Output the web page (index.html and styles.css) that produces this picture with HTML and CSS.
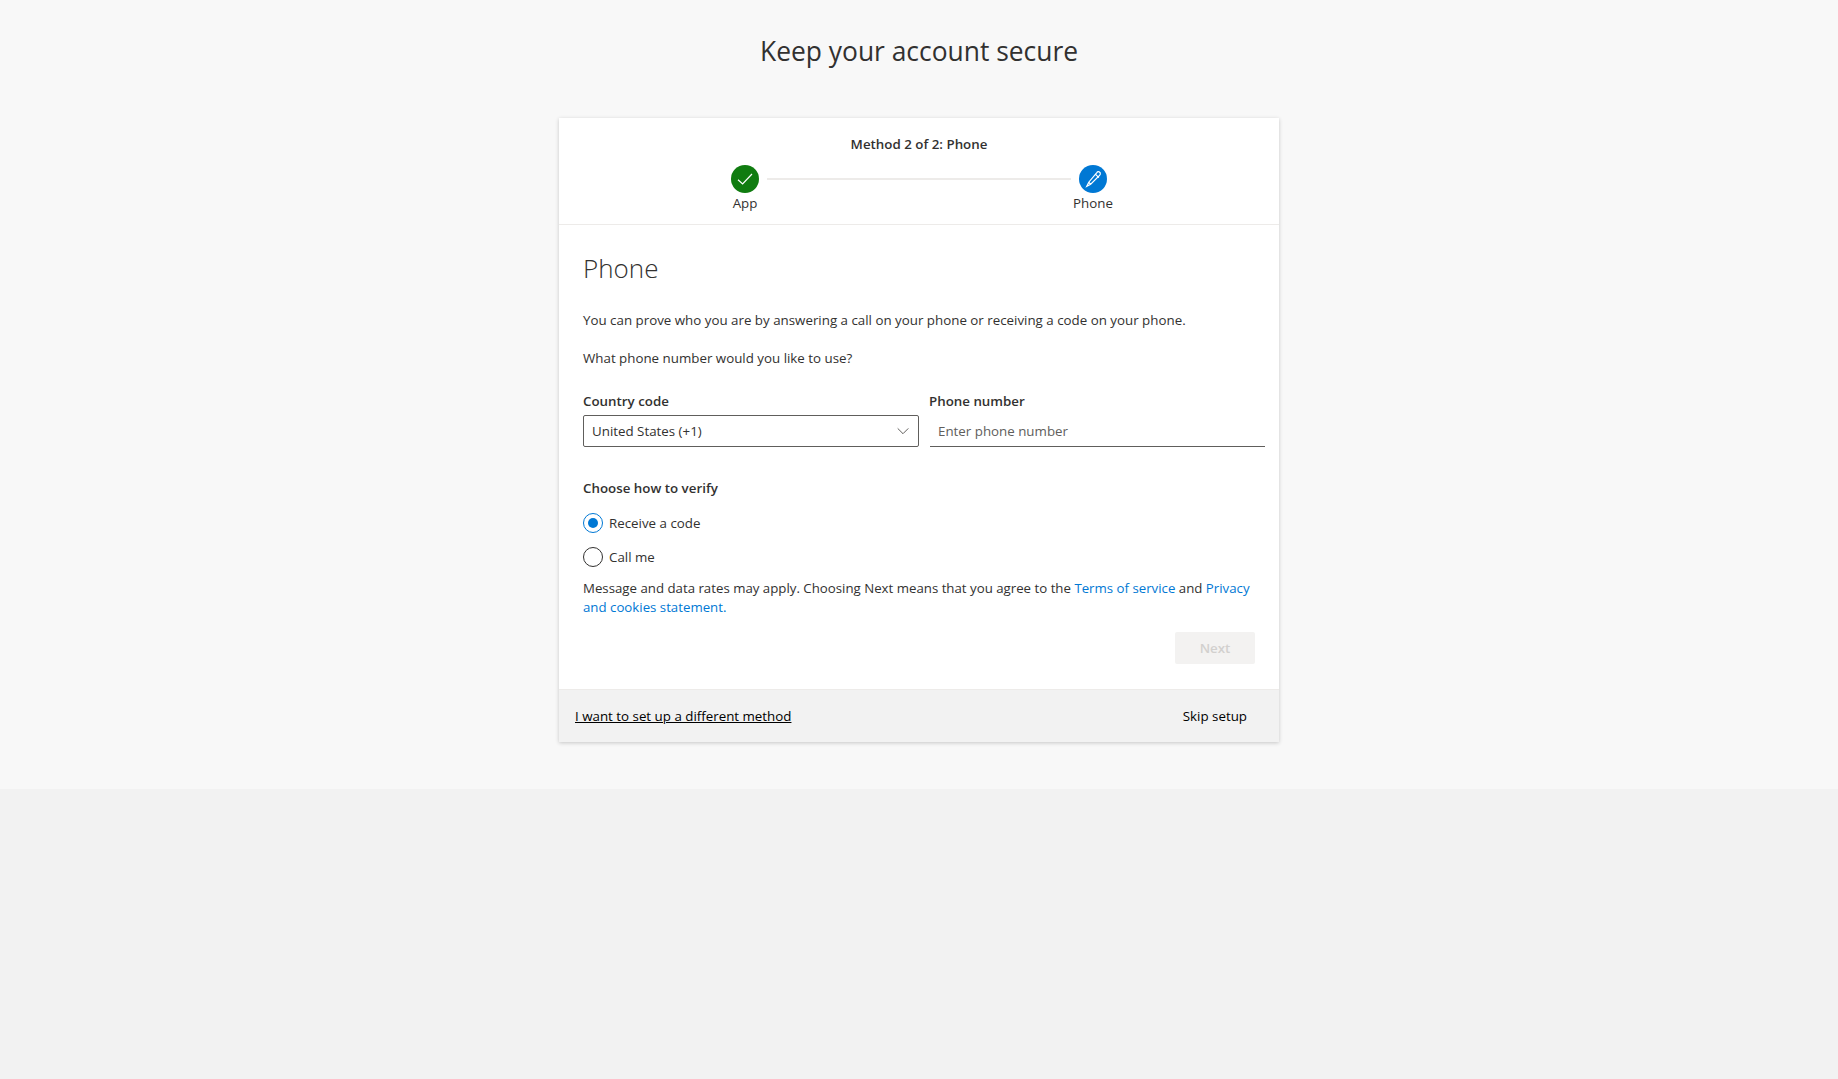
FILE: index.html
```html
<!DOCTYPE html>
<html lang="en">
<head>
    <meta charset="UTF-8">
    <title>Keep your account secure</title>
    <link rel="stylesheet" href="styles.css">
</head>
<body>
    <main class="page">
        <h1 class="page-title">Keep your account secure</h1>
        <section class="card">
            <header class="card-head">
                <div class="method-title">Method 2 of 2: Phone</div>
                <div class="steps">
                    <div class="step">
                        <span class="step-icon done">
                            <svg width="16" height="16" viewBox="0 0 16 16"><path d="M1 8.7L5.6 13 15 3" fill="none" stroke="#fff" stroke-width="1.2"/></svg>
                        </span>
                        <span class="step-label">App</span>
                    </div>
                    <div class="step-line"></div>
                    <div class="step">
                        <span class="step-icon current">
                            <svg width="19" height="19" viewBox="0 0 16 16"><path d="M10.8 2.2a1.6 1.6 0 0 1 2.9 1.3c-.1.4-.3.7-.6 1L5.6 12 2.3 13.7 4 10.3zM9.6 3.5l2.9 2.9M4 10.3l1.6 1.7" fill="none" stroke="#fff" stroke-width="1"/></svg>
                        </span>
                        <span class="step-label">Phone</span>
                    </div>
                </div>
            </header>
            <div class="card-body">
                <h2 class="section-title">Phone</h2>
                <p class="intro">You can prove who you are by answering a call on your phone or receiving a code on your phone.</p>
                <p class="question">What phone number would you like to use?</p>
                <div class="phone-row">
                    <div class="field country">
                        <label class="field-label">Country code</label>
                        <div class="select-box">
                            <span>United States (+1)</span>
                            <svg width="12" height="12" viewBox="0 0 12 12"><path d="M.7 3.4L6 8.7l5.3-5.3" fill="none" stroke="#605e5c" stroke-width="1"/></svg>
                        </div>
                    </div>
                    <div class="field number">
                        <label class="field-label" for="phone">Phone number</label>
                        <input class="phone-input" id="phone" type="text" placeholder="Enter phone number">
                    </div>
                </div>
                <div class="verify-label">Choose how to verify</div>
                <div class="radio-row first">
                    <span class="radio checked"></span>
                    <span>Receive a code</span>
                </div>
                <div class="radio-row">
                    <span class="radio"></span>
                    <span>Call me</span>
                </div>
                <p class="terms">Message and data rates may apply. Choosing Next means that you agree to the <a href="#">Terms of service</a> and <a href="#">Privacy</a> <a href="#">and cookies statement.</a></p>
                <div class="actions">
                    <button class="next-btn" type="button" disabled>Next</button>
                </div>
            </div>
            <footer class="card-foot">
                <a class="other-method" href="#">I want to set up a different method</a>
                <span class="skip">Skip setup</span>
            </footer>
        </section>
    </main>
</body>
</html>
```

FILE: styles.css
```css
* {
    box-sizing: border-box;
}

body {
    margin: 0;
    min-height: 100vh;
    background-color: #f2f2f2;
    font-family: "Open Sans", "Noto Sans", sans-serif;
    font-size: 13.33px;
    color: #323130;
}

.page {
    height: 789px;
    padding-top: 33px;
    background-color: #f8f8f8;
}

.page-title {
    margin: 0 0 47px;
    height: 38px;
    font-size: 26.4px;
    line-height: 36px;
    font-weight: 400;
    text-align: center;
}

.card {
    width: 720px;
    height: 624px;
    margin: 0 auto;
    display: flex;
    flex-direction: column;
    background-color: #fff;
    box-shadow: 0 1px 4px rgba(0, 0, 0, 0.2);
}

.card-head {
    height: 107px;
    padding-top: 17px;
    border-bottom: 1px solid #edebe9;
}

.method-title {
    height: 18px;
    line-height: 18px;
    font-size: 13.33px;
    font-weight: 600;
    text-align: center;
}

.steps {
    display: flex;
    justify-content: center;
    margin-top: 12px;
}

.step {
    width: 60px;
    display: flex;
    flex-direction: column;
    align-items: center;
}

.step-icon {
    width: 28px;
    height: 28px;
    border-radius: 50%;
    display: flex;
    align-items: center;
    justify-content: center;
}

.step-icon.done {
    background-color: #107c10;
}

.step-icon.current {
    background-color: #0078d4;
}

.step-label {
    margin-top: 1px;
    line-height: 18px;
    white-space: nowrap;
}

.step-line {
    width: 304px;
    height: 2px;
    margin: 13px -8px 0;
    background-color: #edebe9;
}

.card-body {
    flex: 1;
    padding: 0 14px 0 24px;
}

.section-title {
    margin: 24px 0 0;
    height: 38px;
    font-size: 26px;
    line-height: 38px;
    font-weight: 300;
}

.intro {
    margin: 23px 0 0;
    line-height: 20px;
}

.question {
    margin: 18px 0 0;
    line-height: 20px;
}

.phone-row {
    display: flex;
    gap: 11px;
    margin-top: 23px;
}

.field-label {
    display: block;
    height: 24px;
    line-height: 20px;
    font-weight: 600;
}

.country {
    width: 336px;
}

.number {
    width: 335px;
}

.number .field-label {
    margin-left: -1px;
}

.select-box {
    height: 32px;
    padding: 0 9px 0 8px;
    display: flex;
    align-items: center;
    justify-content: space-between;
    border: 1px solid #605e5c;
    border-radius: 2px;
}

.phone-input {
    display: block;
    width: 100%;
    height: 32px;
    padding: 0 8px;
    border: 0;
    border-bottom: 1px solid #605e5c;
    outline: none;
    background: transparent;
    font: inherit;
    color: #323130;
}

.phone-input::placeholder {
    color: #605e5c;
    opacity: 1;
}

.verify-label {
    margin-top: 31px;
    line-height: 20px;
    font-weight: 600;
}

.radio-row {
    display: flex;
    align-items: center;
    gap: 6px;
    height: 20px;
    margin-top: 14px;
}

.radio-row.first {
    margin-top: 15px;
}

.radio {
    position: relative;
    width: 20px;
    height: 20px;
    border: 1px solid #323130;
    border-radius: 50%;
}

.radio.checked {
    border-color: #0078d4;
}

.radio.checked::after {
    content: "";
    position: absolute;
    top: 4px;
    left: 4px;
    width: 10px;
    height: 10px;
    border-radius: 50%;
    background-color: #0078d4;
}

.terms {
    margin: 12px 0 0;
    padding-right: 7px;
    font-size: 13.26px;
    line-height: 19px;
}

.terms a {
    color: #0078d4;
    text-decoration: none;
}

.actions {
    display: flex;
    justify-content: flex-end;
    margin-top: 15px;
    padding-right: 10px;
}

.next-btn {
    width: 80px;
    height: 32px;
    border: 0;
    border-radius: 2px;
    background-color: #f3f2f1;
    font: inherit;
    font-weight: 600;
    color: #d2d0ce;
}

.card-foot {
    height: 53px;
    padding: 0 32px 0 16px;
    display: flex;
    align-items: center;
    justify-content: space-between;
    border-top: 1px solid #edebe9;
    background-color: #f2f2f2;
}

.other-method {
    color: #000;
    text-decoration: underline;
}

.skip {
    color: #000;
}
```
